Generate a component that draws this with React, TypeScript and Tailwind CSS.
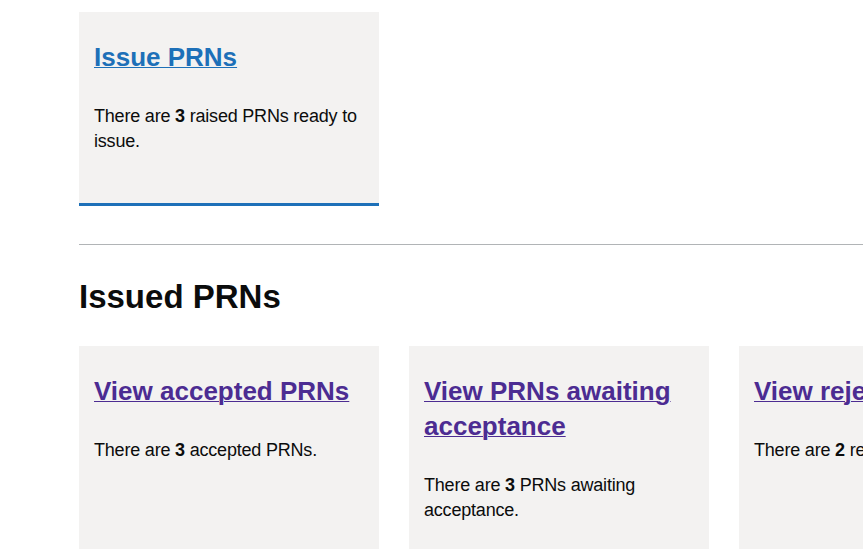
const issued = [
  { title: 'View accepted PRNs', count: 3, rest: 'accepted PRNs.' },
  { title: 'View PRNs awaiting acceptance', count: 3, rest: 'PRNs awaiting acceptance.' },
  { title: 'View rejected PRNs', count: 2, rest: 'rejected PRNs.' },
];

function Card({
  title,
  count,
  rest,
  visited,
  accent,
}: {
  title: string;
  count: number;
  rest: string;
  visited?: boolean;
  accent?: boolean;
}) {
  return (
    <div
      className={`bg-[#f3f2f1] px-[15px] pt-[28px] pb-[49px] ${accent ? 'border-b-[3px] border-[#1d70b8]' : ''}`}
    >
      <h3 className="mb-[29px] text-[26px] font-bold leading-[35px]">
        <a
          href="#"
          className={`underline decoration-1 ${visited ? 'text-[#4c2c92]' : 'text-[#1d70b8]'}`}
        >
          {title}
        </a>
      </h3>
      <p className="text-[18px] leading-[25px] tracking-[-0.2px] text-[#0b0c0c]">
        There are <strong className="font-bold">{count}</strong> {rest}
      </p>
    </div>
  );
}

export default function App() {
  return (
    <div className="w-full min-h-screen overflow-hidden bg-white font-['Liberation_Sans',Arial,sans-serif] text-[#0b0c0c]">
      <div className="ml-[79px] w-[960px] pt-[12px]">
        {/* Ready to issue */}
        <div className="grid grid-cols-[300px_300px_300px] gap-[30px]">
          <Card title="Issue PRNs" count={3} rest="raised PRNs ready to issue." accent />
        </div>

        <hr className="mt-[38px] border-0 border-t border-[#b1b4b6]" />

        {/* Issued */}
        <h2 className="mt-[32px] mb-[29px] text-[33px] font-bold leading-[40px]">Issued PRNs</h2>
        <div className="grid grid-cols-[300px_300px_300px] gap-[30px]">
          {issued.map((c) => (
            <Card key={c.title} title={c.title} count={c.count} rest={c.rest} visited />
          ))}
        </div>
      </div>
    </div>
  );
}
